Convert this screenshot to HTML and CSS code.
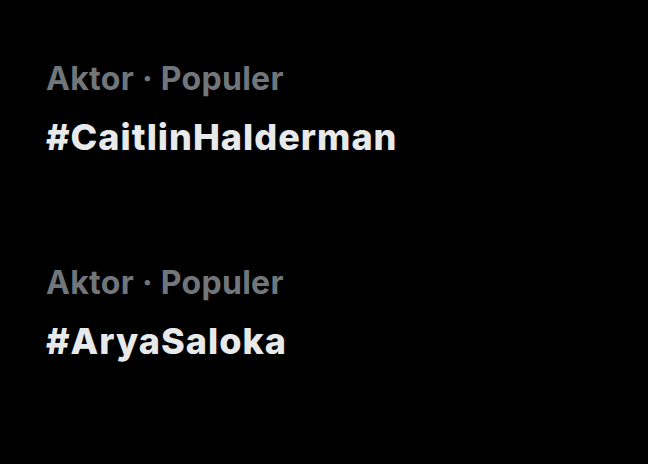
FILE: index.html
```html
<!DOCTYPE html>
<html lang="id">
<head>
  <meta charset="UTF-8" />
  <meta name="viewport" content="width=device-width, initial-scale=1.0" />
  <title>Trending</title>
  <link rel="stylesheet" href="styles.css">
</head>
<body>
  <div class="trend-list">
    <div class="trend">
      <div class="trend-meta">Aktor · Populer</div>
      <div class="trend-name">#CaitlinHalderman</div>
    </div>
    <div class="trend">
      <div class="trend-meta">Aktor · Populer</div>
      <div class="trend-name">#AryaSaloka</div>
    </div>
  </div>
</body>
</html>
```

FILE: styles.css
```css
body {
  margin: 0;
  background: #000;
  font-family: "Inter", "Liberation Sans", sans-serif;
  height: 464px;
  overflow: hidden;
}
.trend-list {
  display: flex;
  flex-direction: column;
  gap: 104px;
  padding: 59px 0 0 46px;
}
.trend {
  display: flex;
  flex-direction: column;
  gap: 16px;
}
.trend-meta {
  font-size: 32px;
  font-weight: 700;
  line-height: 40px;
  letter-spacing: 0.3px;
  color: #71767b;
}
.trend-name {
  font-size: 36px;
  font-weight: 800;
  line-height: 44px;
  letter-spacing: 1px;
  color: #e7e9ea;
}
```
